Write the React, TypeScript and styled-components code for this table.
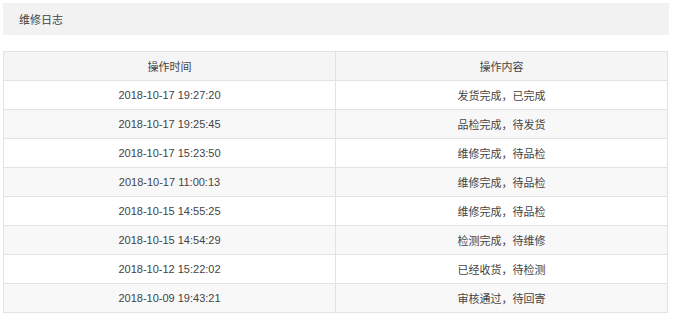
import React from 'react'
import styled, { createGlobalStyle } from 'styled-components'

const GlobalStyle = createGlobalStyle`
  body {
    margin: 0;
    background: #fff;
    font-family: "Liberation Sans", "Noto Sans CJK SC", sans-serif;
    font-size: 11px;
    color: #444;
  }
`

const Page = styled.div`
  padding: 3px 6px 0 3px;
  display: flex;
  flex-direction: column;
  gap: 16px;
`

const TitleBar = styled.div`
  height: 32px;
  background: #f2f2f2;
  display: flex;
  align-items: center;
  padding-left: 16px;
  font-size: 11px;
  color: #444;
`

const Table = styled.table`
  width: 665px;
  border-collapse: collapse;
  border: 1px solid #e2e2e2;
  font-size: 11px;
  color: #444;
`

const HeadCell = styled.th`
  height: 28px;
  font-weight: normal;
  background: #f5f5f5;
  border: 1px solid #e2e2e2;
  text-align: center;
  padding: 0;
  width: 50%;
`

const Row = styled.tr<{ $striped: boolean }>`
  background: ${(p) => (p.$striped ? '#f8f8f8' : '#fff')};
`

const Cell = styled.td`
  height: 28px;
  border: 1px solid #e2e2e2;
  text-align: center;
  padding: 0;
`

const logs = [
  ['2018-10-17 19:27:20', '发货完成，已完成'],
  ['2018-10-17 19:25:45', '品检完成，待发货'],
  ['2018-10-17 15:23:50', '维修完成，待品检'],
  ['2018-10-17 11:00:13', '维修完成，待品检'],
  ['2018-10-15 14:55:25', '维修完成，待品检'],
  ['2018-10-15 14:54:29', '检测完成，待维修'],
  ['2018-10-12 15:22:02', '已经收货，待检测'],
  ['2018-10-09 19:43:21', '审核通过，待回寄'],
]

export default function App() {
  return (
    <Page>
      <GlobalStyle />
      <TitleBar>维修日志</TitleBar>
      <Table>
        <thead>
          <tr>
            <HeadCell>操作时间</HeadCell>
            <HeadCell>操作内容</HeadCell>
          </tr>
        </thead>
        <tbody>
          {logs.map(([time, text], i) => (
            <Row key={time} $striped={i % 2 === 1}>
              <Cell>{time}</Cell>
              <Cell>{text}</Cell>
            </Row>
          ))}
        </tbody>
      </Table>
    </Page>
  )
}
